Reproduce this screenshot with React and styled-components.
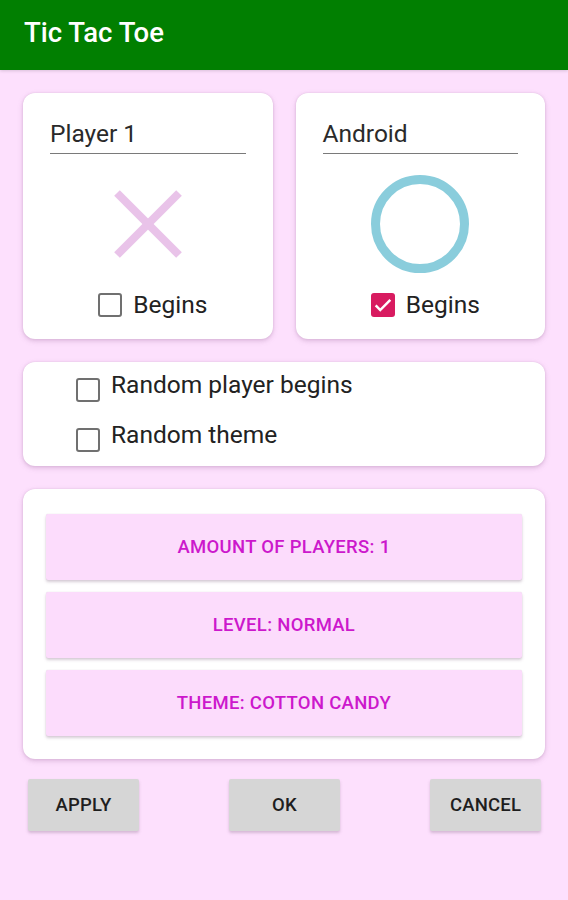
import React from "react";
import styled, { createGlobalStyle } from "styled-components";

const Global = createGlobalStyle`
  html, body { margin: 0; padding: 0; }
  body {
    background: #fde0fd;
    font-family: Roboto, "Noto Sans", "Liberation Sans", sans-serif;
    width: 568px;
    height: 900px;
    overflow: hidden;
  }
`;

const Screen = styled.div`
  width: 568px;
  height: 900px;
  background: #fde0fd;
  display: flex;
  flex-direction: column;
`;

const AppBar = styled.header`
  height: 70px;
  background: #017f01;
  display: flex;
  align-items: center;
  padding: 0 24px;
  box-shadow: 0 1px 3px rgba(0, 0, 0, 0.15);
`;

const Title = styled.h1`
  margin: 0;
  color: #ffffff;
  font-size: 27.5px;
  font-weight: 500;
  margin-top: -5px;
`;

const Content = styled.main`
  display: flex;
  flex-direction: column;
  gap: 23px;
  padding: 23px 23px 0 23px;
`;

const Card = styled.section`
  background: #ffffff;
  border-radius: 12px;
  box-shadow: 0 2px 5px rgba(160, 110, 160, 0.35), 0 0 2px rgba(160, 110, 160, 0.25);
`;

const PlayerRow = styled.div`
  display: grid;
  grid-template-columns: 1fr 1fr;
  gap: 23px;
`;

const PlayerCard = styled(Card)`
  height: 246px;
  box-sizing: border-box;
  display: flex;
  flex-direction: column;
  align-items: center;
  padding: 22px 27px 0 27px;
`;

const NameField = styled.div`
  align-self: stretch;
  font-size: 24.5px;
  color: #2a2a2a;
  line-height: 26px;
  padding: 6px 0 6px 0;
  border-bottom: 1.5px solid #7a7a7a;
`;

const MarkBox = styled.div`
  width: 100px;
  height: 100px;
  margin-top: 20px;
  display: flex;
  align-items: center;
  justify-content: center;
`;

const CheckRow = styled.label`
  display: flex;
  align-items: center;
  gap: 11px;
  font-size: 24.5px;
  color: #222;
  margin-top: ${(p) => p.$top || 0}px;
  margin-left: ${(p) => p.$left || 0}px;
  line-height: 26px;
`;

const CheckText = styled.span`
  position: relative;
  top: ${(p) => p.$lift || 0}px;
`;

const Box = styled.span`
  width: 24px;
  height: 24px;
  box-sizing: border-box;
  border-radius: 3px;
  border: ${(p) => (p.$checked ? "none" : "2.5px solid #707070")};
  background: ${(p) => (p.$checked ? "#d81b60" : "transparent")};
  display: flex;
  align-items: center;
  justify-content: center;
  flex-shrink: 0;
`;

const OptionsCard = styled(Card)`
  height: 104px;
  box-sizing: border-box;
  padding: 15px 0 0 53px;
  display: flex;
  flex-direction: column;
  gap: 24px;
`;

const SettingsCard = styled(Card)`
  height: 270px;
  box-sizing: border-box;
  padding: 25px 23px 0 23px;
  display: flex;
  flex-direction: column;
  gap: 12px;
`;

const SettingButton = styled.button`
  height: 66px;
  border: none;
  border-radius: 2px;
  background: #fcdcfc;
  color: #cc18cc;
  font-family: Roboto, "Noto Sans", sans-serif;
  font-size: 18.5px;
  font-weight: 500;
  letter-spacing: 0.3px;
  text-transform: uppercase;
  box-shadow: 0 2px 3px rgba(120, 90, 120, 0.3), 0 0 1px rgba(120, 90, 120, 0.2);
  cursor: pointer;
`;

const ActionBar = styled.div`
  display: flex;
  justify-content: space-between;
  padding: 20px 27px 0 28px;
`;

const ActionButton = styled.button`
  width: 111px;
  height: 52px;
  border: none;
  border-radius: 2px;
  background: #d6d6d6;
  color: #1e1e1e;
  font-family: Roboto, "Noto Sans", sans-serif;
  font-size: 18.5px;
  font-weight: 500;
  letter-spacing: 0.2px;
  box-shadow: 0 2px 3px rgba(120, 90, 120, 0.3);
  cursor: pointer;
`;

const CheckBox = ({ checked }) => (
  <Box $checked={checked}>
    {checked && (
      <svg width="22" height="22" viewBox="0 0 24 24">
        <path d="M4 12.5l5 5L20 6.5" fill="none" stroke="#fff" strokeWidth="2.8" />
      </svg>
    )}
  </Box>
);

const Cross = () => (
  <svg width="100" height="100" viewBox="0 0 100 100">
    <g stroke="#e9c3e9" strokeWidth="8" strokeLinecap="butt">
      <line x1="19" y1="19" x2="81" y2="81" />
      <line x1="81" y1="19" x2="19" y2="81" />
    </g>
  </svg>
);

const Ring = () => (
  <svg width="100" height="100" viewBox="0 0 100 100">
    <circle cx="50" cy="50" r="44.5" fill="none" stroke="#8acddc" strokeWidth="9" />
  </svg>
);

export default function App() {
  return (
    <>
      <Global />
      <Screen>
        <AppBar>
          <Title>Tic Tac Toe</Title>
        </AppBar>
        <Content>
          <PlayerRow>
            <PlayerCard>
              <NameField>Player 1</NameField>
              <MarkBox>
                <Cross />
              </MarkBox>
              <CheckRow $top={18} $left={10}>
                <CheckBox checked={false} />
                <CheckText>Begins</CheckText>
              </CheckRow>
            </PlayerCard>
            <PlayerCard>
              <NameField>Android</NameField>
              <MarkBox>
                <Ring />
              </MarkBox>
              <CheckRow $top={18} $left={10}>
                <CheckBox checked />
                <CheckText>Begins</CheckText>
              </CheckRow>
            </PlayerCard>
          </PlayerRow>
          <OptionsCard>
            <CheckRow>
              <CheckBox checked={false} />
              <CheckText $lift={-5}>Random player begins</CheckText>
            </CheckRow>
            <CheckRow>
              <CheckBox checked={false} />
              <CheckText $lift={-5}>Random theme</CheckText>
            </CheckRow>
          </OptionsCard>
          <SettingsCard>
            <SettingButton>Amount of players: 1</SettingButton>
            <SettingButton>Level: Normal</SettingButton>
            <SettingButton>Theme: Cotton Candy</SettingButton>
          </SettingsCard>
        </Content>
        <ActionBar>
          <ActionButton>APPLY</ActionButton>
          <ActionButton>OK</ActionButton>
          <ActionButton>CANCEL</ActionButton>
        </ActionBar>
      </Screen>
    </>
  );
}
